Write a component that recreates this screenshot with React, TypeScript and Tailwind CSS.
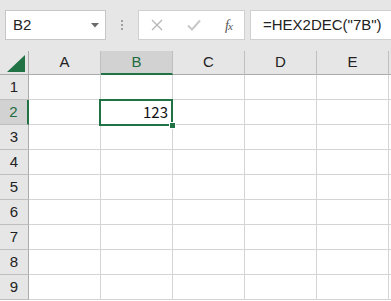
const cols = ['A', 'B', 'C', 'D', 'E', ''];
const rows = [1, 2, 3, 4, 5, 6, 7, 8, 9];

function FormulaBar() {
  return (
    <div className="h-[51px] bg-[#e6e6e6] flex items-start pt-[10px] pl-[5px]">
      <div className="w-[101px] h-[30px] bg-white border border-[#c6c6c6] flex items-center justify-between pl-[7px] pr-[6px]">
        <span className="text-[15px] text-[#222]">B2</span>
        <svg width="8" height="5" viewBox="0 0 8 5">
          <path d="M0 0 L8 0 L4 4.5 Z" fill="#6a6a6a" />
        </svg>
      </div>
      <div className="w-[32px] h-[30px] flex flex-col items-center justify-center gap-[2px]">
        <span className="w-[2px] h-[2px] bg-[#a0a0a0]" />
        <span className="w-[2px] h-[2px] bg-[#a0a0a0]" />
        <span className="w-[2px] h-[2px] bg-[#a0a0a0]" />
      </div>
      <div className="w-[107px] h-[30px] bg-white border border-[#d0d0d0] flex items-center pl-[12px]">
        <svg width="12" height="12" viewBox="0 0 12 12" className="mr-[24px]">
          <path d="M1 1 L11 11 M11 1 L1 11" stroke="#b5b5b5" strokeWidth="1.3" />
        </svg>
        <svg width="14" height="12" viewBox="0 0 14 12" className="mr-[24px]">
          <path d="M1 6.5 L5 10.5 L13 1.5" stroke="#c8c8c8" strokeWidth="2" fill="none" />
        </svg>
        <span className="italic text-[14px] text-[#555] font-['Liberation_Serif',serif] tracking-[-1px]">
          f<span className="text-[11px]">x</span>
        </span>
      </div>
      <div className="ml-[5px] flex-1 h-[30px] bg-white border border-[#d0d0d0] border-r-0 flex items-center pl-[12px]">
        <span className="text-[15px] text-[#222]">=HEX2DEC("7B")</span>
      </div>
    </div>
  );
}

function Grid() {
  return (
    <div className="relative grid grid-cols-[29px_repeat(6,72px)] grid-rows-[24px_repeat(9,25px)] bg-white">
      <div className="bg-[#e6e6e6] border-r border-b border-[#ababab] relative">
        <svg width="18" height="17" viewBox="0 0 18 17" className="absolute right-[3px] bottom-[2px]">
          <path d="M18 0 L18 17 L0 17 Z" fill="#217346" />
        </svg>
      </div>
      {cols.map((c, i) => (
        <div
          key={i}
          className={
            c === 'B'
              ? 'bg-[#d2d2d2] border-r border-[#bfbfbf] border-b-2 border-b-[#217346] flex items-center justify-center text-[15px] text-[#1e6b40]'
              : 'bg-[#e6e6e6] border-r border-b border-[#bfbfbf] border-b-[#ababab] flex items-center justify-center text-[15px] text-[#222]'
          }
        >
          {c}
        </div>
      ))}
      {rows.map((r) => (
        <div key={r} className="contents">
          <div
            className={
              r === 2
                ? 'bg-[#d2d2d2] border-r-2 border-r-[#217346] border-b border-[#bfbfbf] flex items-center justify-center text-[15px] text-[#1e6b40]'
                : 'bg-[#e6e6e6] border-r border-r-[#ababab] border-b border-[#bfbfbf] flex items-center justify-center text-[15px] text-[#222]'
            }
          >
            {r}
          </div>
          {cols.map((c, i) => (
            <div
              key={i}
              className="border-r border-b border-[#d4d4d4] flex items-center justify-end pr-[4px] text-[15px] text-[#111] font-['Noto_Sans_CJK_JP','Liberation_Sans',sans-serif]"
            >
              {r === 2 && c === 'B' ? '123' : ''}
            </div>
          ))}
        </div>
      ))}
      <div className="absolute left-[99px] top-[48px] w-[74px] h-[27px] border-2 border-[#217346] pointer-events-none">
        <div className="absolute right-[-5px] bottom-[-5px] w-[7px] h-[7px] bg-[#217346] border border-white" />
      </div>
    </div>
  );
}

export default function App() {
  return (
    <div className="w-[391px] h-[301px] overflow-hidden bg-white font-['Liberation_Sans',Arial,sans-serif]">
      <FormulaBar />
      <Grid />
    </div>
  );
}
